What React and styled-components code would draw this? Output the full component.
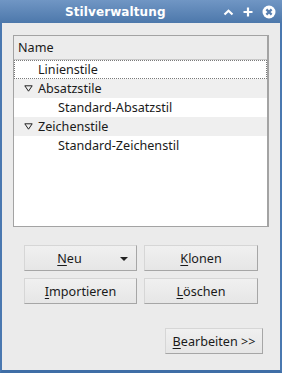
import React, { useState } from 'react';
import styled, { createGlobalStyle } from 'styled-components';

const GlobalStyle = createGlobalStyle`
  html, body {
    margin: 0;
    padding: 0;
    background: #ebebeb;
  }
`;

const styles = [
  { name: 'Linienstile', level: 0 },
  { name: 'Absatzstile', level: 0, group: true },
  { name: 'Standard-Absatzstil', level: 1 },
  { name: 'Zeichenstile', level: 0, group: true },
  { name: 'Standard-Zeichenstil', level: 1 },
];

function Mnemonic({ text }) {
  return (
    <>
      <u>{text[0]}</u>
      {text.slice(1)}
    </>
  );
}

function App() {
  const [selected, setSelected] = useState('Linienstile');

  return (
    <>
      <GlobalStyle />
      <Window>
        <TitleBar>
          <Title>Stilverwaltung</Title>
          <TitleIcons>
            <svg width="11" height="7" viewBox="0 0 11 7">
              <path d="M1.5 5.5 L5.5 1.8 L9.5 5.5" fill="none" stroke="#fff" strokeWidth="2.2" />
            </svg>
            <svg width="10" height="10" viewBox="0 0 10 10">
              <path d="M5 0.5 V9.5 M0.5 5 H9.5" stroke="#fff" strokeWidth="2.2" />
            </svg>
            <svg width="14" height="14" viewBox="0 0 14 14">
              <circle cx="7" cy="7" r="6.5" fill="#fff" />
              <path d="M4.4 4.4 L9.6 9.6 M9.6 4.4 L4.4 9.6" stroke="#587fb0" strokeWidth="2.2" />
            </svg>
          </TitleIcons>
        </TitleBar>

        <Content>
          <TreeBox>
            <Header>Name</Header>
            {styles.map((s) => (
              <Row
                key={s.name}
                $group={s.group}
                $focused={selected === s.name}
                onClick={() => setSelected(s.name)}
              >
                <Expander>
                  {s.group && (
                    <svg width="9" height="7" viewBox="0 0 9 7">
                      <path d="M0.8 0.8 H8.2 L4.5 6.2 Z" fill="none" stroke="#222" strokeWidth="1" />
                    </svg>
                  )}
                </Expander>
                <RowLabel $level={s.level}>{s.name}</RowLabel>
              </Row>
            ))}
          </TreeBox>

          <ButtonGrid>
            <Button $menu>
              <span><Mnemonic text="Neu" /></span>
              <DropArrow />
            </Button>
            <Button><Mnemonic text="Klonen" /></Button>
            <Button><Mnemonic text="Importieren" /></Button>
            <Button><Mnemonic text="Löschen" /></Button>
          </ButtonGrid>

          <Footer>
            <Button $wide>
              <Mnemonic text="Bearbeiten" />&nbsp;&gt;&gt;
            </Button>
          </Footer>
        </Content>
      </Window>
    </>
  );
}

const Window = styled.div`
  width: 282px;
  height: 373px;
  box-sizing: border-box;
  border-left: 2px solid #4a78b0;
  border-right: 2px solid #4a78b0;
  border-bottom: 3px solid #3f6ea6;
  background: #ebebeb;
  display: flex;
  flex-direction: column;
  font-family: "Noto Sans", "DejaVu Sans", sans-serif;
  color: #1a1a1a;
`;

const TitleBar = styled.div`
  height: 23px;
  margin: 0 -2px;
  background: linear-gradient(#7096c4, #4d78ab);
  display: flex;
  align-items: center;
`;

const Title = styled.div`
  flex: 1;
  padding-left: 65px;
  font-family: "DejaVu Sans", sans-serif;
  font-weight: bold;
  font-size: 12px;
  color: #fff;
  letter-spacing: 0.1px;
`;

const TitleIcons = styled.div`
  display: flex;
  align-items: center;
  gap: 9px;
  padding-right: 6px;

  svg:first-child {
    margin-top: 1px;
  }
`;

const Content = styled.div`
  flex: 1;
  display: flex;
  flex-direction: column;
  padding: 12px 11px 0 11px;
`;

const TreeBox = styled.div`
  height: 192px;
  box-sizing: border-box;
  border: 1px solid #a3a3a3;
  border-right-width: 2px;
  background: #fff;
  display: flex;
  flex-direction: column;
`;

const Header = styled.div`
  height: 24px;
  box-sizing: border-box;
  border-bottom: 1px solid #c9c9c9;
  background: #ececec;
  display: flex;
  align-items: center;
  padding-left: 4px;
  font-size: 12.6px;
`;

const Row = styled.div`
  height: 19px;
  box-sizing: border-box;
  display: flex;
  align-items: center;
  font-size: 12.6px;
  background: ${(p) => (p.$group ? '#efefef' : '#fff')};
  border: 1px dotted ${(p) => (p.$focused ? '#7a7a7a' : 'transparent')};
  cursor: default;
`;

const Expander = styled.span`
  width: 23px;
  box-sizing: border-box;
  padding-left: 9px;
  display: flex;
`;

const RowLabel = styled.span`
  padding-left: ${(p) => p.$level * 20}px;
`;

const ButtonGrid = styled.div`
  margin-top: 18px;
  display: grid;
  grid-template-columns: 113px 114px;
  justify-content: center;
  gap: 7px;
`;

const Button = styled.button`
  height: 26px;
  width: ${(p) => (p.$wide ? '98px' : 'auto')};
  box-sizing: border-box;
  border: 1px solid;
  border-color: #d6d6d6 #a6a6a6 #a6a6a6 #d6d6d6;
  background: linear-gradient(#f0f0f0, #e6e6e6);
  font-family: "Noto Sans", "DejaVu Sans", sans-serif;
  font-size: 12.6px;
  color: #1a1a1a;
  display: flex;
  align-items: center;
  justify-content: center;
  position: relative;
  padding: 0 ${(p) => (p.$menu ? '22px' : '0')} 0 0;
  cursor: pointer;

  u {
    text-underline-offset: 2px;
  }
`;

const DropArrow = styled.span`
  position: absolute;
  right: 8px;
  top: 11px;
  border-left: 4px solid transparent;
  border-right: 4px solid transparent;
  border-top: 4px solid #222;
`;

const Footer = styled.div`
  margin-top: 24px;
  display: flex;
  justify-content: flex-end;
  padding-right: 6px;
`;

export default App;
